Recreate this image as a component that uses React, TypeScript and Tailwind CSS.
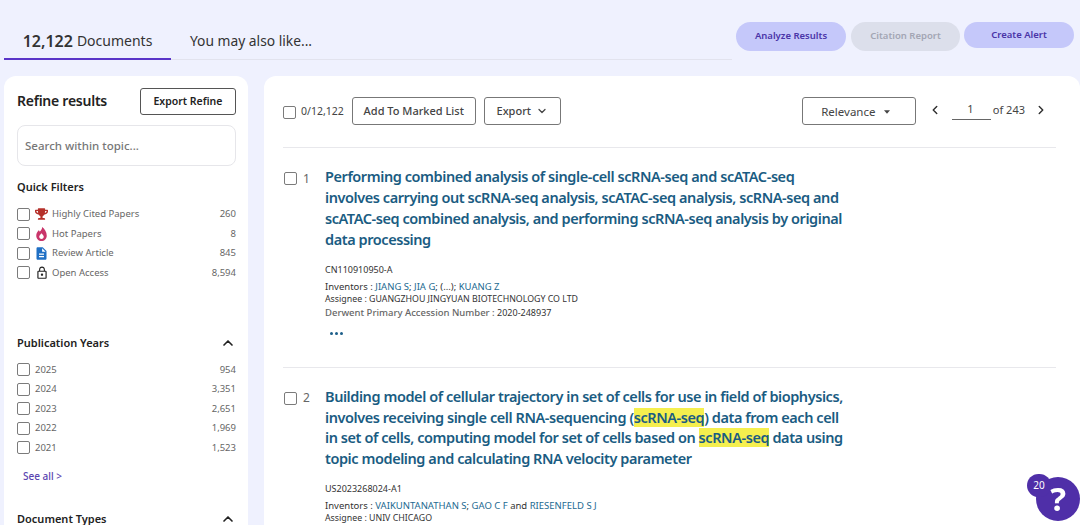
import React from 'react';
import { ChevronDown, ChevronLeft, ChevronRight, ChevronUp } from 'lucide-react';
import { FaTrophy } from 'react-icons/fa';
import { MdDescription, MdLockOutline } from 'react-icons/md';

const Flame = () => (
  <svg viewBox="0 0 12 16" className="h-[14px] w-[11px]">
    <path
      fillRule="evenodd"
      fill="#c9356a"
      d="M6.6 0C7 2.6 5.4 3.6 4 5.4 3.7 4.7 3.4 4.2 2.8 3.8 1.2 5.6 0 7.4 0 9.9 0 13.3 2.7 16 6 16s6-2.7 6-6.1C12 5.8 9.600 2 6.600 0zM6 13.700c-1.500 0-2.600-1.100-2.600-2.500 0-1.500 1.400-2.700 2.600-4.200 1.200 1.500 2.600 2.700 2.600 4.200 0 1.400-1.100 2.500-2.600 2.500z"
    />
  </svg>
);

const quickFilters = [
  { label: 'Highly Cited Papers', count: '260', icon: <FaTrophy className="h-[12px] w-[13px] text-[#b5302a]" /> },
  { label: 'Hot Papers', count: '8', icon: <Flame /> },
  { label: 'Review Article', count: '845', icon: <MdDescription className="h-[15px] w-[15px] text-[#1f6fc4]" /> },
  { label: 'Open Access', count: '8,594', icon: <MdLockOutline className="h-[14px] w-[14px] text-[#222]" /> },
];

const years = [
  { label: '2025', count: '954' },
  { label: '2024', count: '3,351' },
  { label: '2023', count: '2,651' },
  { label: '2022', count: '1,969' },
  { label: '2021', count: '1,523' },
];

const Checkbox = ({ className = '' }: { className?: string }) => (
  <span className={`block h-[13px] w-[13px] shrink-0 rounded-[2px] border-[1.5px] border-[#7b7b7b] bg-white ${className}`} />
);

const Mark = ({ children }: { children: React.ReactNode }) => (
  <span className="inline-block h-[19px] bg-[#f5ef4e] leading-[19px]">{children}</span>
);

const Link = ({ children }: { children: React.ReactNode }) => (
  <span className="text-[#1d6a91]">{children}</span>
);

const FilterRow = ({ label, count, icon }: { label: string; count: string; icon?: React.ReactNode }) => (
  <div className="flex h-[19.5px] items-center text-[9.5px] text-[#666]">
    <Checkbox />
    {icon ? <span className="ml-[4px] flex w-[15px] justify-center">{icon}</span> : null}
    <span className={icon ? 'ml-[3px]' : 'ml-[5px]'}>{label}</span>
    <span className="ml-auto">{count}</span>
  </div>
);

const Result = ({ index, title, children }: { index: number; title: React.ReactNode[]; children: React.ReactNode }) => (
  <div className="flex">
    <div className="flex h-[21px] w-[42px] shrink-0 translate-y-[2px] items-center pl-px">
      <Checkbox />
      <span className="ml-[6px] text-[12px] text-[#666]">{index}</span>
    </div>
    <div>
      <div className="text-[14.5px] font-semibold leading-[20.9px] tracking-[-0.43px] whitespace-nowrap text-[#1a5c82]">
        {title.map((line, i) => (
          <div key={i}>{line}</div>
        ))}
      </div>
      {children}
    </div>
  </div>
);

export default function App() {
  return (
    <div className="h-[525px] w-[1080px] overflow-hidden bg-[#eff1fe] font-['Noto_Sans',sans-serif] text-[#222]">
      {/* Tabs and actions */}
      <div className="flex h-[76px]">
        <div className="ml-[4px] mt-[22px] flex h-[38px] w-[728px] border-b border-[#e2e3ee]">
          <div className="flex h-[38px] w-[167px] items-center justify-center border-b-2 border-[#5a35c8] pt-[1px] text-[14px] text-[#333]">
            <span className="mr-[4px] text-[16px] font-semibold">12,122</span> Documents
          </div>
          <div className="ml-[19px] flex h-[37px] items-center pt-[2px] text-[13.8px] text-[#333]">You may also like...</div>
        </div>
        <div className="ml-[4px] mt-[22px] flex items-start text-[9.5px] font-semibold">
          <div className="flex h-[29px] w-[110px] items-center justify-center rounded-full bg-[#c5c8fa] text-[#4a35a8]">Analyze Results</div>
          <div className="ml-[5px] flex h-[29px] w-[109px] items-center justify-center rounded-full bg-[#dcdfeb] text-[#a3a6b4]">Citation Report</div>
          <div className="ml-[4px] flex h-[26px] w-[110px] items-center justify-center rounded-full bg-[#c5c8fa] text-[#4a35a8]">Create Alert</div>
        </div>
      </div>

      <div className="flex items-start">
        {/* Sidebar */}
        <aside className="ml-[4px] h-[449px] w-[244px] shrink-0 rounded-t-[12px] bg-white pl-[13px] pr-[12px] pt-[12px]">
          <div className="flex items-center justify-between">
            <span className="-translate-y-px text-[14px] font-semibold tracking-[-0.25px] text-[#222]">Refine results</span>
            <button className="h-[27px] w-[96px] rounded-[3px] border border-[#555] bg-white text-[10.5px] font-semibold text-[#222]">Export Refine</button>
          </div>
          <div className="mt-[10px] flex h-[41px] items-center rounded-[8px] border border-[#e6e6ea] px-[7px] text-[11.5px] font-medium text-[#777]">
            Search within topic...
          </div>
          <div className="mt-[13px] text-[11px] font-semibold text-[#222]">Quick Filters</div>
          <div className="mt-[9px]">
            {quickFilters.map((f) => (
              <FilterRow key={f.label} label={f.label} count={f.count} icon={f.icon} />
            ))}
          </div>
          <div className="mt-[52px] flex items-center justify-between text-[11px] font-semibold text-[#222]">
            Publication Years
            <ChevronUp className="h-[16px] w-[16px]" strokeWidth={2.5} />
          </div>
          <div className="mt-[9px]">
            {years.map((y) => (
              <FilterRow key={y.label} label={y.label} count={y.count} />
            ))}
          </div>
          <div className="ml-[6px] mt-[11px] text-[10px] font-medium text-[#5a45b0]">See all &gt;</div>
          <div className="mt-[27px] flex items-center justify-between text-[11px] font-semibold text-[#222]">
            Document Types
            <ChevronUp className="h-[16px] w-[16px]" strokeWidth={2.5} />
          </div>
        </aside>

        {/* Results */}
        <main className="ml-[16px] h-[449px] w-[816px] shrink-0 overflow-hidden rounded-t-[12px] bg-white pl-[19px] pr-[24px] pt-[21px]">
          <div className="flex h-[28px] items-center">
            <Checkbox className="translate-y-px" />
            <span className="ml-[5px] translate-y-px text-[10.5px] text-[#444]">0/12,122</span>
            <button className="ml-[8px] h-[28px] w-[124px] rounded-[3px] border border-[#777] text-[11px] font-medium text-[#444]">Add To Marked List</button>
            <button className="ml-[8px] flex h-[28px] w-[77px] items-center justify-center rounded-[3px] border border-[#777] text-[11px] font-medium text-[#444]">
              Export <ChevronDown className="ml-[5px] h-[12px] w-[12px]" strokeWidth={2.5} />
            </button>
            <button className="ml-auto flex h-[28px] w-[114px] items-center justify-center rounded-[3px] border border-[#777] pr-[6px] pt-[2px] text-[11.5px] text-[#444]">
              Relevance
              <svg viewBox="0 0 10 6" className="ml-[9px] h-[4px] w-[6px]">
                <path d="M0 0h10L5 6z" fill="#444" />
              </svg>
            </button>
            <ChevronLeft className="ml-[12px] h-[14px] w-[14px] -translate-y-px text-[#333]" strokeWidth={2.5} />
            <span className="ml-[10px] flex h-[20px] w-[39px] -translate-y-px items-center justify-center border-b border-[#666] pr-[2px] text-[11px] text-[#444]">1</span>
            <span className="ml-[2px] -translate-y-px text-[11px] text-[#444]">of 243</span>
            <ChevronRight className="ml-[9px] h-[14px] w-[14px] -translate-y-px text-[#333]" strokeWidth={2.5} />
            <span className="w-[8px]" />
          </div>

          <div className="mt-[22px] border-t border-[#e8e8ec] pb-[32px] pt-[18px]">
            <Result
              index={1}
              title={[
                'Performing combined analysis of single-cell scRNA-seq and scATAC-seq',
                'involves carrying out scRNA-seq analysis, scATAC-seq analysis, scRNA-seq and',
                'scATAC-seq combined analysis, and performing scRNA-seq analysis by original',
                'data processing',
              ]}
            >
              <div className="mt-[13px] text-[9px] leading-[13px] text-[#333]">
                <div>CN110910950-A</div>
                <div className="mt-[4px] text-[9.5px]">
                  Inventors : <Link>JIANG S</Link>; <Link>JIA G</Link>; (...); <Link>KUANG Z</Link>
                </div>
                <div className="text-[8.8px]">Assignee : GUANGZHOU JINGYUAN BIOTECHNOLOGY CO LTD</div>
                <div>
                  <span className="text-[9.5px] font-medium text-[#666]">Derwent Primary Accession Number :</span> 2020-248937
                </div>
              </div>
              <div className="ml-[5px] mt-[13px]">
                <span className="flex gap-[2px]">
                  <span className="h-[3px] w-[3px] rounded-full bg-[#1d5f8a]" />
                  <span className="h-[3px] w-[3px] rounded-full bg-[#1d5f8a]" />
                  <span className="h-[3px] w-[3px] rounded-full bg-[#1d5f8a]" />
                </span>
              </div>
            </Result>
          </div>

          <div className="border-t border-[#e8e8ec] pt-[18px]">
            <Result
              index={2}
              title={[
                'Building model of cellular trajectory in set of cells for use in field of biophysics,',
                <>involves receiving single cell RNA-sequencing (<Mark>scRNA-seq</Mark>) data from each cell</>,
                <>in set of cells, computing model for set of cells based on <Mark>scRNA-seq</Mark> data using</>,
                'topic modeling and calculating RNA velocity parameter',
              ]}
            >
              <div className="mt-[13px] text-[9px] leading-[13px] text-[#333]">
                <div>US2023268024-A1</div>
                <div className="mt-[4px] text-[9.5px]">
                  Inventors : <Link>VAIKUNTANATHAN S</Link>; <Link>GAO C F</Link> and <Link>RIESENFELD S J</Link>
                </div>
                <div className="text-[8.8px]">Assignee : UNIV CHICAGO</div>
              </div>
            </Result>
          </div>
        </main>
      </div>

      {/* Help widget */}
      <div className="fixed left-[1036px] top-[477px] flex h-[44px] w-[44px] items-center justify-center rounded-full bg-[#4f2fa8] text-[33px] font-bold text-white">?</div>
      <div className="fixed left-[1027px] top-[474px] flex h-[23px] w-[24px] items-center justify-center rounded-full bg-[#4f2fa8] text-[10px] text-white">20</div>
    </div>
  );
}
